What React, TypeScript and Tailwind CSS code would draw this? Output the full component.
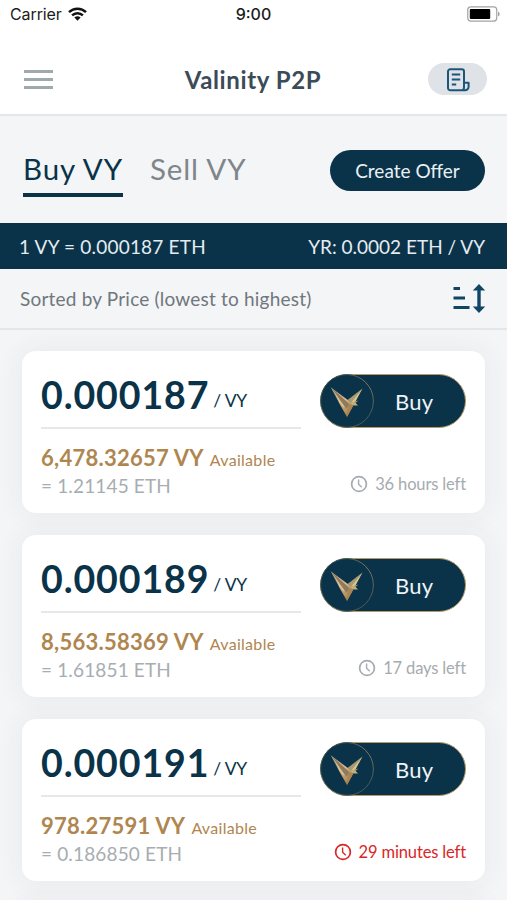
import clsx from "clsx";

type Offer = {
    price: string;
    amount: string;
    total: string;
    timeLeft: string;
    urgent?: boolean;
};

const offers: Offer[] = [
    { price: "0.000187", amount: "6,478.32657", total: "1.21145", timeLeft: "36 hours left" },
    { price: "0.000189", amount: "8,563.58369", total: "1.61851", timeLeft: "17 days left" },
    { price: "0.000191", amount: "978.27591", total: "0.186850", timeLeft: "29 minutes left", urgent: true },
];

const StatusBar = () => (
    <div className="grid grid-cols-3 items-center h-7 px-[10px] font-['Inter',sans-serif] text-[16px] text-[#1c1c1c]">
        <div className="flex items-center gap-[6px]">
            <span className="tracking-[-0.1px]">Carrier</span>
            <svg width="19" height="14" viewBox="0 0 19 14" fill="none" stroke="#111" strokeWidth="2.5">
                <path d="M1 5.2a12.2 12.2 0 0 1 17 0" />
                <path d="M4.1 8.4a7.7 7.7 0 0 1 10.8 0" />
                <path d="M6.4 10.6a4.5 4.5 0 0 1 6.2 0L9.5 13.8z" fill="#111" stroke="none" />
            </svg>
        </div>
        <span className="text-center font-medium">9:00</span>
        <div className="flex justify-end">
            <svg className="-mr-[3px]" width="33" height="16" viewBox="0 0 33 16" fill="none">
                <rect x="0.75" y="0.9" width="29" height="14.2" rx="3" stroke="#a3a3a3" strokeWidth="1.2" />
                <rect x="2.8" y="2.9" width="20.4" height="10.2" rx="1" fill="#000" />
                <path d="M31 5.7c2.2.7 2.2 3.9 0 4.6z" fill="#a3a3a3" />
            </svg>
        </div>
    </div>
);

const Header = () => (
    <header className="flex items-center justify-between h-[88px] pl-6 pr-5 pt-[26px] pb-[10px] border-b-2 border-[#e4e7ea]">
        <button className="flex flex-col gap-[5px] w-[29px]">
            <span className="h-[3px] bg-[#a0a9ab]" />
            <span className="h-[3px] bg-[#a0a9ab]" />
            <span className="h-[3px] bg-[#a0a9ab]" />
        </button>
        <h1 className="pl-[25px] pt-[2px] text-[24px] leading-7 font-bold tracking-[0.6px] text-[#3b4b58]">Valinity P2P</h1>
        <button className="flex items-center justify-center w-[59px] h-8 rounded-full bg-[#dfe2e6]">
            <svg className="mt-px ml-px" width="24" height="24" viewBox="0 0 24 24" fill="none" stroke="#1b557a" strokeWidth="2" strokeLinejoin="round">
                <path d="M18 14.8V3.5a2.3 2.3 0 0 0-2.3-2.3H4.3A2.3 2.3 0 0 0 2 3.5V20a2.3 2.3 0 0 0 2.3 2.3H19a3.6 3.6 0 0 0 3.6-3.6v-3.9H18v4.5c0 1.7-.6 3-2.2 3" />
                <path d="M5.8 6.5h8.4M5.8 11.5h8.4M5.8 16.5h4.4" />
            </svg>
        </button>
    </header>
);

const CoinLogo = () => (
    <svg width="54" height="54" viewBox="0 0 54 54" fill="none">
        <defs>
            <linearGradient id="gold" x1="12" y1="14" x2="27" y2="43" gradientUnits="userSpaceOnUse">
                <stop offset="0" stopColor="#9a9c8a" />
                <stop offset="0.5" stopColor="#d8bd92" />
                <stop offset="1" stopColor="#a37b43" />
            </linearGradient>
            <linearGradient id="ring" x1="0" y1="0" x2="54" y2="54" gradientUnits="userSpaceOnUse">
                <stop offset="0" stopColor="#15384c" />
                <stop offset="0.55" stopColor="#8c8265" />
                <stop offset="1" stopColor="#2f4a52" />
            </linearGradient>
        </defs>
        <circle cx="27" cy="27" r="26.4" fill="#0a3349" stroke="url(#ring)" strokeWidth="0.9" />
        {/* left wing */}
        <path d="M11 13.5 28.5 26.5 33 32 27 43 20.5 31.5z" fill="url(#gold)" />
        <path d="M11 13.5 30 30.5 25.5 35z" fill="#92795a" />
        <path d="M11 13.5 22.5 32 26 34.5z" fill="#dcc49a" />
        <path d="M30 30.5 33 32 27 43 27.5 33z" fill="#a98352" />
        {/* right wing */}
        <path d="M42.5 14.5 27.5 26 31.5 30.5z" fill="#a89b74" />
        <path d="M42.5 14.5 31 29 35.5 27.5z" fill="#d9c894" />
        <path d="M30.5 29 38.5 26.5 35.5 28.8 38 31.5 32.500 31.5z" fill="#c6ad73" />
    </svg>
);

const Clock = () => (
    <svg width="18" height="18" viewBox="0 0 18 18" fill="none" stroke="currentColor" strokeWidth="1.7">
        <circle cx="9" cy="9" r="7.4" />
        <path d="M8.6 4.5v4.8l3.2 3" strokeWidth="1.4" />
    </svg>
);

const OfferCard = ({ price, amount, total, timeLeft, urgent }: Offer) => (
    <div className="flex justify-between h-[162px] rounded-[14px] bg-white px-[19px] shadow-[0_0_24px_4px_rgba(50,60,70,0.05)]">
        <div className="w-[260px]">
            <div className="flex items-baseline h-[78px] pt-[21px] border-b-2 border-[#e6e9eb] text-[#0a3349]">
                <span className="text-[37.5px] leading-[46px] font-bold tracking-[0.9px]">{price}</span>
                <span className="relative -top-[2px] ml-[4px] text-[17.5px] tracking-[-0.2px]">/ VY</span>
            </div>
            <div className="flex items-baseline mt-[15px] leading-7 text-[#af8650]">
                <span className="text-[22px] font-bold tracking-[0.25px]">{amount} VY</span>
                <span className="ml-[6px] text-[16px] tracking-[0.3px]">Available</span>
            </div>
            <p className="-mt-[2px] text-[19px] leading-7 tracking-[0.15px] text-[#a7adb1]">= {total} ETH</p>
        </div>
        <div className="flex flex-col items-end justify-between pt-[23px] pb-[17px]">
            <button className="flex items-center w-[146px] h-[54px] rounded-full border border-[#b79b68] bg-[#0a3349] text-[22px] tracking-[0.2px] text-[#eef4f8]">
                <span className="-ml-px">
                    <CoinLogo />
                </span>
                <span className="ml-[21px]">Buy</span>
            </button>
            <div className={clsx("flex items-center gap-[7px] text-[16.5px] leading-6 tracking-[-0.14px]", urgent ? "text-[#d92626]" : "text-[#a5abb0]")}>
                <Clock />
                {timeLeft}
            </div>
        </div>
    </div>
);

const App = () => {
    return (
        <div className="h-[900px] overflow-hidden bg-[#f3f5f7] font-['Lato',sans-serif]">
            <div className="bg-white">
                <StatusBar />
                <Header />
            </div>

            {/* Tabs */}
            <div className="flex items-start justify-between h-[107px] pl-[23px] pr-[22px] pt-[34px]">
                <div className="flex gap-[27px] text-[29.5px] leading-[32px] tracking-[0.9px]">
                    <button className="flex items-start pt-[3px] h-[47px] border-b-4 border-[#0a3349] text-[#0a3349]">Buy VY</button>
                    <button className="flex items-start pt-[3px] h-[47px] border-b-4 border-transparent text-[#7f868b]">Sell VY</button>
                </div>
                <button className="w-[155px] h-[41px] pt-[2px] rounded-full bg-[#0a3349] text-[19px] text-[#e9f0f4]">Create Offer</button>
            </div>

            {/* Rates */}
            <div className="flex items-center justify-between h-[46px] pt-[2px] pl-[19px] pr-[22px] bg-[#0a3349] text-[19px] text-[#e4ecf1]">
                <span className="tracking-[0.2px]">1 VY = 0.000187 ETH</span>
                <span>YR: 0.0002 ETH / VY</span>
            </div>

            {/* Sorting */}
            <div className="flex items-center justify-between h-[61px] pl-5 pr-[21px] border-b-2 border-[#e4e7ea] text-[#70777d]">
                <span className="pt-px text-[19px] tracking-[0.2px]">Sorted by Price (lowest to highest)</span>
                <svg width="33" height="29" viewBox="0 0 33 29" fill="#114565">
                    <path d="M0.5 3h6.500v3H0.5zM0.5 12.5h11.5v3H0.5zM0.5 22h16v3H0.5z" />
                    <path d="M26 0l6.2 6.5h-4.5v16h4.5L26 29l-6.200-6.5h4.5v-16h-4.5z" />
                </svg>
            </div>

            <div className="flex flex-col gap-[22px] px-[22px] pt-[21px]">
                {offers.map((offer) => (
                    <OfferCard key={offer.price} {...offer} />
                ))}
                <div className="h-10 shrink-0 rounded-[14px] bg-white shadow-[0_0_24px_4px_rgba(50,60,70,0.05)]" />
            </div>
        </div>
    );
};

export default App;
